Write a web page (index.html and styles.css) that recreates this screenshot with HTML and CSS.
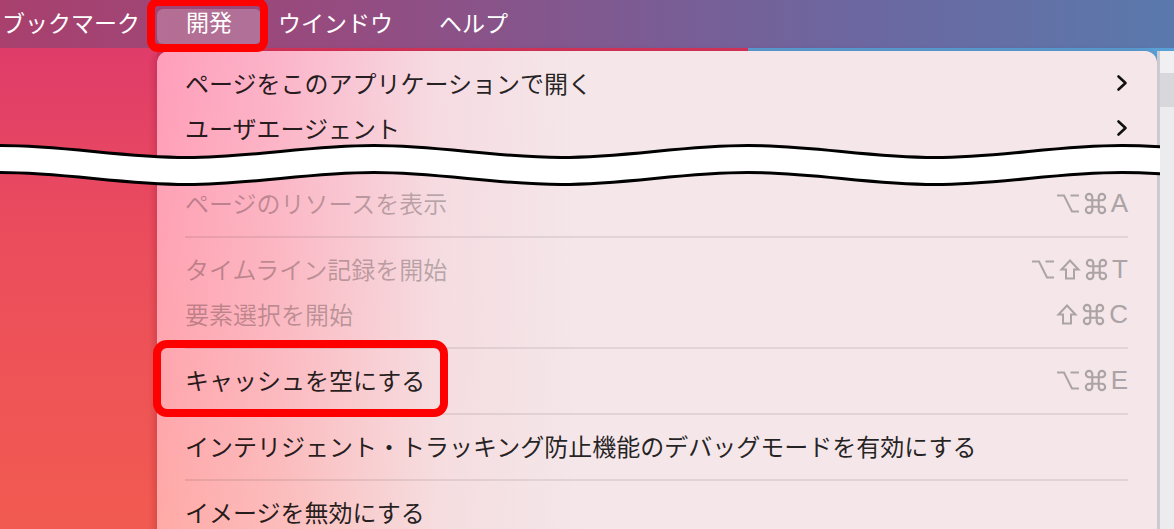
FILE: index.html
```html
<!DOCTYPE html>
<html lang="ja">
<head>
<meta charset="utf-8">
<title>開発メニュー</title>
<link rel="stylesheet" href="styles.css">
</head>
<body>
<div class="screen">
  <header class="menubar">
    <span class="bar-item bar-first">ブックマーク</span>
    <span class="bar-item bar-active">開発</span>
    <span class="bar-item">ウインドウ</span>
    <span class="bar-item">ヘルプ</span>
  </header>

  <div class="stage">
    <div class="desktop"></div>

    <div class="menu">
      <div class="row">
        <span>ページをこのアプリケーションで開く</span>
        <svg class="chev" width="12" height="18" viewBox="0 0 12 18"><path d="M2.5 2.5L9.5 9L2.5 15.5"/></svg>
      </div>
      <div class="row">
        <span>ユーザエージェント</span>
        <svg class="chev" width="12" height="18" viewBox="0 0 12 18"><path d="M2.5 2.5L9.5 9L2.5 15.5"/></svg>
      </div>

      <div class="cut"></div>

      <div class="row dis">
        <span>ページのリソースを表示</span>
        <span class="keys">
          <svg class="k-opt" width="22" height="19" viewBox="0 0 22 19"><path d="M0 1.5H7L15 17.5H22M13.5 1.5H22"/></svg>
          <svg class="k-cmd" width="21" height="21" viewBox="2.2 2.2 19.6 19.6"><path d="M15 6v12a3 3 0 1 0 3-3H6a3 3 0 1 0 3 3V6a3 3 0 1 0-3 3h12a3 3 0 1 0-3-3"/></svg>
          <span class="k-letter">A</span>
        </span>
      </div>
      <div class="sep"></div>
      <div class="row dis">
        <span>タイムライン記録を開始</span>
        <span class="keys">
          <svg class="k-opt" width="22" height="19" viewBox="0 0 22 19"><path d="M0 1.5H7L15 17.5H22M13.5 1.5H22"/></svg>
          <svg class="k-shift" width="20" height="21" viewBox="0 0 20 21"><path d="M10 1.5L18.5 10.5H14V19.5H6V10.5H1.5Z"/></svg>
          <svg class="k-cmd" width="21" height="21" viewBox="2.2 2.2 19.6 19.6"><path d="M15 6v12a3 3 0 1 0 3-3H6a3 3 0 1 0 3 3V6a3 3 0 1 0-3 3h12a3 3 0 1 0-3-3"/></svg>
          <span class="k-letter">T</span>
        </span>
      </div>
      <div class="row dis">
        <span>要素選択を開始</span>
        <span class="keys">
          <svg class="k-shift" width="20" height="21" viewBox="0 0 20 21"><path d="M10 1.5L18.5 10.5H14V19.5H6V10.5H1.5Z"/></svg>
          <svg class="k-cmd" width="21" height="21" viewBox="2.2 2.2 19.6 19.6"><path d="M15 6v12a3 3 0 1 0 3-3H6a3 3 0 1 0 3 3V6a3 3 0 1 0-3 3h12a3 3 0 1 0-3-3"/></svg>
          <span class="k-letter">C</span>
        </span>
      </div>
      <div class="sep"></div>
      <div class="row">
        <span>キャッシュを空にする</span>
        <span class="keys">
          <svg class="k-opt" width="22" height="19" viewBox="0 0 22 19"><path d="M0 1.5H7L15 17.5H22M13.5 1.5H22"/></svg>
          <svg class="k-cmd" width="21" height="21" viewBox="2.2 2.2 19.6 19.6"><path d="M15 6v12a3 3 0 1 0 3-3H6a3 3 0 1 0 3 3V6a3 3 0 1 0-3 3h12a3 3 0 1 0-3-3"/></svg>
          <span class="k-letter">E</span>
        </span>
      </div>
      <div class="sep"></div>
      <div class="row">
        <span>インテリジェント・トラッキング防止機能のデバッグモードを有効にする</span>
      </div>
      <div class="sep"></div>
      <div class="row">
        <span>イメージを無効にする</span>
      </div>
    </div>

    <div class="edge"></div>
  </div>

  <svg class="tear" width="1160" height="70" viewBox="0 0 1160 70">
    <path class="tear-fill" d="M0 15.5C67 15.5 120 27.5 187 27.5S307 15.5 374 15.5S494 27.5 561 27.5S681 15.5 748 15.5S868 27.5 935 27.5S1055 15.5 1122 15.5S1242 27.5 1309 27.5L1309 54.5C1242 54.5 1189 42.5 1122 42.5S1002 54.5 935 54.5S815 42.5 748 42.5S628 54.5 561 54.5S441 42.5 374 42.5S254 54.5 187 54.5S67 42.5 0 42.5Z"/>
    <path class="tear-line" d="M0 15.5C67 15.5 120 27.5 187 27.5S307 15.5 374 15.5S494 27.5 561 27.5S681 15.5 748 15.5S868 27.5 935 27.5S1055 15.5 1122 15.5S1242 27.5 1309 27.5"/>
    <path class="tear-line" d="M0 42.5C67 42.5 120 54.5 187 54.5S307 42.5 374 42.5S494 54.5 561 54.5S681 42.5 748 42.5S868 54.5 935 54.5S1055 42.5 1122 42.5S1242 54.5 1309 54.5"/>
  </svg>

  <div class="mark mark-dev"></div>
  <div class="mark mark-cache"></div>
</div>
</body>
</html>
```

FILE: styles.css
```css
* { box-sizing: border-box; }

body {
  margin: 0;
  background: #e9e9ec;
}

.screen {
  position: relative;
  width: 1174px;
  height: 529px;
  overflow: hidden;
  font-family: "Noto Sans CJK JP", "Noto Sans", sans-serif;
}

/* ---------- menu bar ---------- */
.menubar {
  display: flex;
  align-items: flex-start;
  height: 48px;
  color: #fff;
  font-size: 23px;
  background: linear-gradient(to right, #a9406d 0%, #964b7f 28%, #7e5a91 52%, #6b68a1 75%, #5a79ac 100%);
}

.bar-item {
  padding: 0 23px;
  line-height: 44px;
  white-space: nowrap;
}

.bar-first {
  padding-left: 2px;
}

.bar-active {
  height: 35px;
  margin: 9px -6px 0;
  padding: 0 29px 11px;
  line-height: 24px;
  border-radius: 6px;
  background: rgba(255, 255, 255, 0.22);
}

/* ---------- stage below the bar ---------- */
.stage {
  display: grid;
  grid-template-columns: 157px 1000px 17px;
  height: 481px;
  background: linear-gradient(to right, #d5355a 0 748px, #58a0d6 748px);
}

.desktop {
  background: linear-gradient(to bottom, #e03c6a 0%, #eb4d5c 40%, #f25b50 100%);
}

.menu {
  position: relative;
  z-index: 1;
  margin-top: 3px;
  padding-top: 10px;
  border-radius: 12px 12px 0 0;
  background:
    linear-gradient(to right, rgba(244, 230, 233, 0) 0px, rgba(244, 230, 233, 0.3) 120px, rgba(244, 230, 233, 0.85) 280px, #f4e6e9 420px),
    linear-gradient(to bottom, #ff9ebc 0%, #ffa3b2 45%, #ffaaa6 100%);
  box-shadow: -3px 0 6px rgba(90, 0, 20, 0.18);
}

.edge {
  margin-top: 3px;
  border-left: 3px solid #cdcdd1;
  background: linear-gradient(to bottom, #f0f0f3 0 22px, #d8d8dc 22px 56px, #ececef 56px);
}

.row {
  display: flex;
  align-items: center;
  justify-content: space-between;
  height: 45px;
  padding: 0 29px 2px 28px;
  font-size: 24px;
  color: rgba(0, 0, 0, 0.86);
  white-space: nowrap;
}

.row.dis {
  color: rgba(0, 0, 0, 0.25);
}

.cut {
  height: 30px;
}

.sep {
  height: 2px;
  margin: 10px 29px 9px 28px;
  background: rgba(0, 0, 0, 0.08);
}

.chev path {
  fill: none;
  stroke: #111;
  stroke-width: 2.6;
  stroke-linecap: round;
  stroke-linejoin: round;
}

.keys {
  display: flex;
  align-items: center;
  gap: 6px;
  margin-top: 1px;
}

.keys svg {
  overflow: visible;
}

.keys svg path {
  fill: none;
  stroke: #aca3a6;
  stroke-width: 2;
}

.k-cmd path {
  stroke-width: 1.85;
}

.k-shift path {
  stroke-linejoin: miter;
}

.k-letter {
  margin-left: -1px;
  font-family: "Liberation Sans", Arial, sans-serif;
  font-size: 26px;
  line-height: 26px;
  color: #aca3a6;
}

/* ---------- torn-page break ---------- */
.tear {
  position: absolute;
  left: 0;
  top: 130px;
  z-index: 4;
}

.tear-fill {
  fill: #fff;
}

.tear-line {
  fill: none;
  stroke: #000;
  stroke-width: 3;
}

/* ---------- red annotation boxes ---------- */
.mark {
  position: absolute;
  z-index: 3;
  border: 8px solid #ff0000;
}

.mark-dev {
  left: 147px;
  top: -2px;
  width: 121px;
  height: 54px;
  border-radius: 11px;
}

.mark-cache {
  left: 153px;
  top: 340px;
  width: 295px;
  height: 77px;
  border-radius: 14px;
}
```
